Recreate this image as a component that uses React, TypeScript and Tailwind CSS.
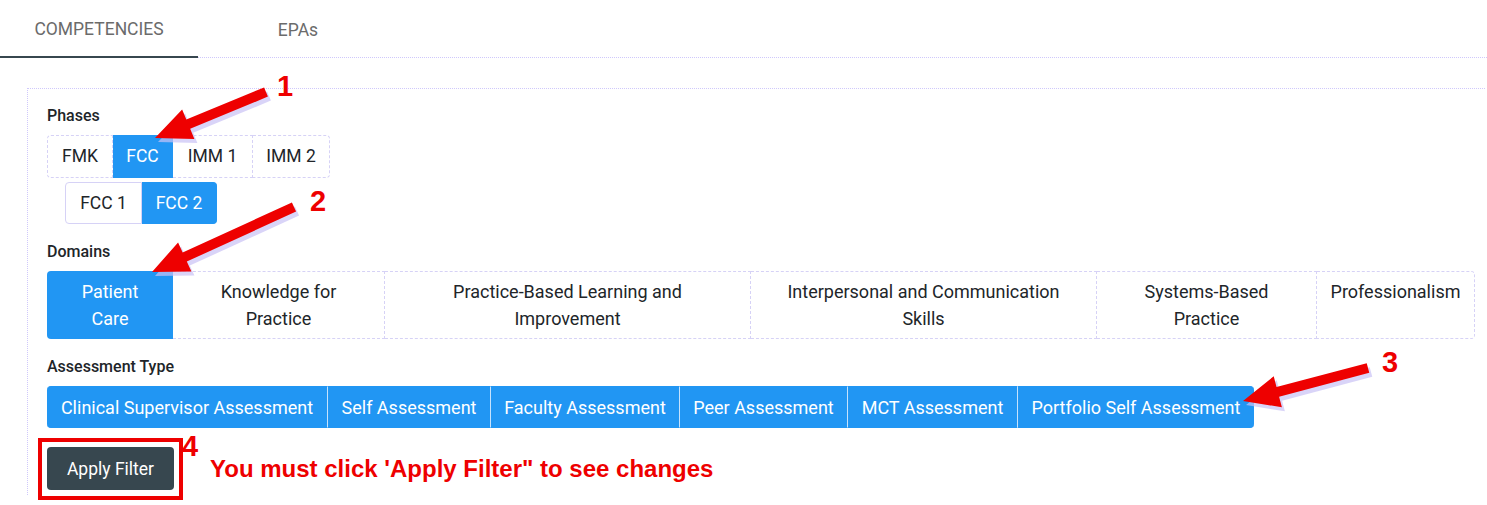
import React from 'react';

const phases = [
  { label: 'FMK', w: 66, active: false },
  { label: 'FCC', w: 60, active: true },
  { label: 'IMM 1', w: 80, active: false },
  { label: 'IMM 2', w: 77, active: false },
];

const subPhases = [
  { label: 'FCC 1', w: 77, active: false },
  { label: 'FCC 2', w: 75, active: true },
];

const domains = [
  { lines: ['Patient', 'Care'], w: 126, active: true },
  { lines: ['Knowledge for', 'Practice'], w: 212, active: false },
  { lines: ['Practice-Based Learning and', 'Improvement'], w: 366, active: false },
  { lines: ['Interpersonal and Communication', 'Skills'], w: 346, active: false },
  { lines: ['Systems-Based', 'Practice'], w: 220, active: false },
  { lines: ['Professionalism'], w: 158, active: false },
];

const assessments = [
  { label: 'Clinical Supervisor Assessment', w: 280 },
  { label: 'Self Assessment', w: 163 },
  { label: 'Faculty Assessment', w: 189 },
  { label: 'Peer Assessment', w: 168 },
  { label: 'MCT Assessment', w: 170 },
  { label: 'Portfolio Self Assessment', w: 237 },
];

// polygon for a fat annotation arrow, tail -> tip
function arrowPoints(x1: number, y1: number, x2: number, y2: number) {
  const dx = x2 - x1;
  const dy = y2 - y1;
  const len = Math.hypot(dx, dy);
  const ux = dx / len;
  const uy = dy / len;
  const nx = -uy;
  const ny = ux;
  const shaft = 5;
  const headLen = 36;
  const headHalf = 16;
  const bx = x2 - ux * headLen;
  const by = y2 - uy * headLen;
  const pts = [
    [x1 + nx * shaft, y1 + ny * shaft],
    [bx + nx * shaft, by + ny * shaft],
    [bx + nx * headHalf, by + ny * headHalf],
    [x2, y2],
    [bx - nx * headHalf, by - ny * headHalf],
    [bx - nx * shaft, by - ny * shaft],
    [x1 - nx * shaft, y1 - ny * shaft],
  ];
  return pts.map((p) => p.join(',')).join(' ');
}

const arrows = [
  [266, 92, 155, 138],
  [294, 207, 152, 272],
  [1368, 368, 1243, 401],
];

const Label: React.FC<{ children: React.ReactNode }> = ({ children }) => (
  <div className="text-[16px] leading-[20px] font-medium text-[#212529]">{children}</div>
);

export default function App() {
  return (
    <div
      className="relative w-[1487px] h-[505px] overflow-hidden bg-white"
      style={{ fontFamily: 'Roboto, "Noto Sans", sans-serif' }}
    >
      {/* tabs */}
      <div className="flex h-[58px]">
        <div className="w-[198px] flex items-center justify-center border-b-2 border-[#37474f] text-[17.5px] text-[#6b6b6b] pt-[2px]">
          COMPETENCIES
        </div>
        <div className="flex-1 flex flex-col">
          <div className="flex-1 flex">
            <div className="w-[200px] flex items-center justify-center text-[17.5px] text-[#6b6b6b] pt-[3px]">EPAs</div>
          </div>
          <div className="border-b border-dotted border-[#cfc8fb]" />
        </div>
      </div>

      {/* filter card */}
      <div className="ml-[27px] mr-[2px] mt-[30px] h-[407px] border-l border-t border-dotted border-[#cfc8fb] pl-[19px] pt-[17px]">
        <Label>Phases</Label>
        <div className="mt-[9px] flex">
          {phases.map((p, i) => (
            <div
              key={p.label}
              style={{ width: p.w }}
              className={
                'shrink-0 h-[43px] flex items-center justify-center text-[17.5px] border border-dashed ' +
                (i > 0 ? 'border-l-0 ' : '') +
                (i === 0 ? 'rounded-l-[4px] ' : '') +
                (i === phases.length - 1 ? 'rounded-r-[4px] ' : '') +
                (p.active
                  ? 'bg-[#2196f3] text-white border-[#2196f3]'
                  : 'text-[#212529] border-[#d6d2f6]')
              }
            >
              {p.label}
            </div>
          ))}
        </div>
        <div className="mt-[4px] ml-[18px] flex">
          {subPhases.map((p, i) => (
            <div
              key={p.label}
              style={{ width: p.w }}
              className={
                'shrink-0 h-[42px] flex items-center justify-center text-[17.5px] border ' +
                (i === 0 ? 'rounded-l-[4px] ' : 'rounded-r-[4px] border-l-0 ') +
                (p.active ? 'bg-[#2196f3] text-white border-[#2196f3]' : 'text-[#212529] border-[#d6d2f6]')
              }
            >
              {p.label}
            </div>
          ))}
        </div>

        <div className="mt-[18px]">
          <Label>Domains</Label>
        </div>
        <div className="mt-[9px] flex">
          {domains.map((d, i) => (
            <div
              key={d.lines[0]}
              style={{ width: d.w }}
              className={
                'shrink-0 h-[68px] pt-[6px] text-center text-[18px] leading-[27px] border border-dashed ' +
                (i > 0 ? 'border-l-0 ' : '') +
                (i === 0 ? 'rounded-l-[4px] ' : '') +
                (i === domains.length - 1 ? 'rounded-r-[4px] ' : '') +
                (d.active ? 'bg-[#2196f3] text-white border-[#2196f3]' : 'text-[#212529] border-[#d6d2f6]')
              }
            >
              {d.lines.map((l) => (
                <div key={l}>{l}</div>
              ))}
            </div>
          ))}
        </div>

        <div className="mt-[18px]">
          <Label>Assessment Type</Label>
        </div>
        <div className="mt-[9px] flex">
          {assessments.map((a, i) => (
            <div
              key={a.label}
              style={{ width: a.w }}
              className={
                'shrink-0 h-[42px] flex items-center justify-center text-[18px] text-white bg-[#2196f3] border-y border-[#2196f3] ' +
                (i > 0 ? 'border-l border-l-[#c6e2fd] ' : 'rounded-l-[4px] ') +
                (i === assessments.length - 1 ? 'rounded-r-[4px]' : '')
              }
            >
              {a.label}
            </div>
          ))}
        </div>

        <div className="mt-[19px] flex items-center">
          <button className="w-[127px] h-[43px] rounded-[4px] bg-[#37474f] text-white text-[17.5px] flex items-center justify-center pt-[1px]">
            Apply Filter
          </button>
          <div
            className="ml-[36px] text-[24px] font-bold text-[#ee0000] pt-[1px]"
            style={{ fontFamily: '"Liberation Sans", Arial, sans-serif' }}
          >
            You must click 'Apply Filter" to see changes
          </div>
        </div>
      </div>

      {/* annotations */}
      <svg className="absolute inset-0 pointer-events-none" width="1487" height="505">
        {arrows.map(([x1, y1, x2, y2], i) => (
          <g key={i}>
            <polygon points={arrowPoints(x1 + 3, y1 + 4, x2 + 3, y2 + 4)} fill="#c9c2f5" opacity="0.7" />
            <polygon points={arrowPoints(x1, y1, x2, y2)} fill="#ee0000" />
          </g>
        ))}
        <rect x="40" y="440" width="141" height="58" fill="none" stroke="#ee0000" strokeWidth="4" />
      </svg>
      {[
        { n: '1', x: 277, y: 70 },
        { n: '2', x: 310, y: 185 },
        { n: '3', x: 1382, y: 346 },
        { n: '4', x: 182, y: 430 },
      ].map((t) => (
        <div
          key={t.n}
          className="absolute text-[29px] leading-[32px] font-bold text-[#ee0000]"
          style={{ left: t.x, top: t.y, fontFamily: '"Liberation Sans", Arial, sans-serif' }}
        >
          {t.n}
        </div>
      ))}
    </div>
  );
}
